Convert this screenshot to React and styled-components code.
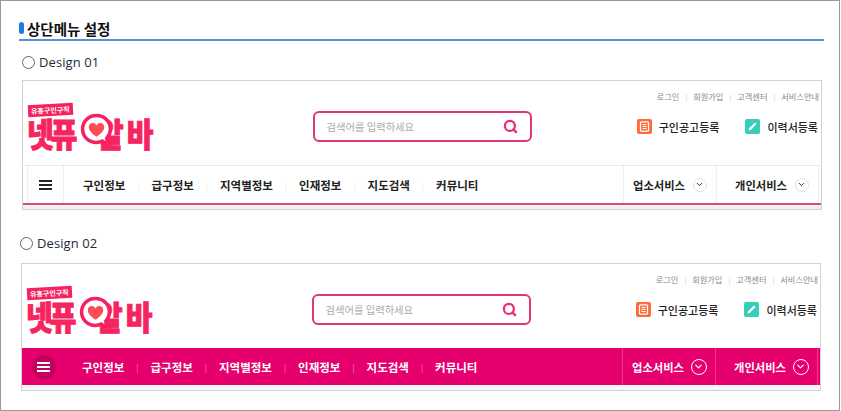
import styled, { createGlobalStyle } from 'styled-components';
import { ChevronDown, Search } from 'lucide-react';

const FONT = '"Noto Sans CJK KR", "Noto Sans", sans-serif';

const MENU = ['구인정보', '급구정보', '지역별정보', '인재정보', '지도검색', '커뮤니티'];
const LINKS = ['로그인', '회원가입', '고객센터', '서비스안내'];
const SERVICES = ['업소서비스', '개인서비스'];

const Logo = () => (
  <LogoWrap>
    <LogoTag>유흥구인구직</LogoTag>
    <LogoWord>넷퓨</LogoWord>
    <LogoWord $right>알바</LogoWord>
    <LogoBubble viewBox="0 0 32 32">
      <path
        d="M16 2.5C8.2 2.5 2.5 8.3 2.5 15.5S8.2 28.5 16 28.5c2.2 0 4-.4 5.6-1.2 1.8 1.6 4.2 2.6 7 2.7-1.5-1.6-2.5-3.6-2.8-5.4 2.2-2.4 3.7-5.4 3.7-8.6C29.5 8.3 23.8 2.5 16 2.5Z"
        fill="#fff"
        stroke="#f5225f"
        strokeWidth="3.4"
      />
      <path
        d="M16 23c-5-3.6-7.5-6.4-7.5-9.3 0-2.300 1.700-3.900 3.800-3.900 1.500 0 2.800.8 3.700 2.300.9-1.500 2.200-2.300 3.700-2.300 2.100 0 3.800 1.600 3.800 3.900 0 2.900-2.500 5.700-7.500 9.300Z"
        fill="#fb4d55"
      />
    </LogoBubble>
  </LogoWrap>
);

const DocIcon = () => (
  <svg width="15" height="15" viewBox="0 0 15 15">
    <rect width="15" height="15" rx="2" fill="#ff6b3d" />
    <rect x="3.5" y="2.8" width="8" height="9.4" rx="1" fill="none" stroke="#fff" strokeWidth="1.2" />
    <path d="M5.5 5.5h4M5.5 7.5h4M5.5 9.5h4" stroke="#fff" strokeWidth="1" />
  </svg>
);

const PenIcon = () => (
  <svg width="15" height="15" viewBox="0 0 15 15">
    <rect width="15" height="15" rx="2" fill="#38cdb9" />
    <path d="M3.5 11.5l.6-2.200 5.300-5.300a1 1 0 0 1 1.400 0l.2.200a1 1 0 0 1 0 1.400L5.700 10.900Z" fill="#fff" />
  </svg>
);

const Header = ({ filled }) => (
  <Box $filled={filled}>
    <TopLinks>
      {LINKS.map((link) => (
        <TopLink key={link}>{link}</TopLink>
      ))}
    </TopLinks>
    <MainRow>
      <Logo />
      <SearchBox>
        <Placeholder>검색어를 입력하세요</Placeholder>
        <Search size={15} strokeWidth={3.6} color="#ea2a78" />
      </SearchBox>
      <Actions>
        <Action>
          <DocIcon />
          <span>구인공고등록</span>
        </Action>
        <Action>
          <PenIcon />
          <span>이력서등록</span>
        </Action>
      </Actions>
    </MainRow>
    <Nav $filled={filled}>
      <BurgerCell $filled={filled}>
        <Burger $filled={filled}>
          <i />
          <i />
          <i />
        </Burger>
      </BurgerCell>
      <Menu>
        {MENU.map((item) => (
          <MenuItem key={item} $filled={filled}>{item}</MenuItem>
        ))}
      </Menu>
      {SERVICES.map((item) => (
        <Service key={item} $filled={filled}>
          {item}
          <Chevron $filled={filled}>
            <ChevronDown size={filled ? 11 : 9} strokeWidth={2.5} />
          </Chevron>
        </Service>
      ))}
    </Nav>
    <Tint $filled={filled} />
  </Box>
);

const App = () => (
  <>
    <GlobalStyle />
    <Frame>
      <Title>
        <TitleMark />
        상단메뉴 설정
      </Title>
      <Option>
        <Radio />
        Design 01
      </Option>
      <Header />
      <Option $second>
        <Radio />
        Design 02
      </Option>
      <Header filled />
    </Frame>
  </>
);

const GlobalStyle = createGlobalStyle`
  html, body {
    margin: 0;
    background: #fff;
  }
`;

const Frame = styled.div`
  width: 840px;
  height: 411px;
  box-sizing: border-box;
  border: 1px solid #999;
  padding: 16px 15px 0 18px;
  font-family: ${FONT};
  overflow: hidden;
`;

const Title = styled.div`
  display: flex;
  align-items: center;
  gap: 3px;
  height: 22px;
  border-bottom: 2px solid #5b8fd6;
  font-size: 14.5px;
  font-weight: 700;
  color: #111;
`;

const TitleMark = styled.span`
  width: 5px;
  height: 12px;
  border-radius: 3px;
  background: #1b7de0;
`;

const Option = styled.div`
  display: flex;
  align-items: center;
  gap: 4px;
  height: 20px;
  margin: ${({ $second }) => ($second ? '23px 0 10px 1px' : '11px 0 8px 3px')};
  font-family: "Open Sans", sans-serif;
  font-size: 13px;
  letter-spacing: 0.1px;
  color: #1f2a3c;
`;

const Radio = styled.span`
  width: 13px;
  height: 13px;
  box-sizing: border-box;
  border: 1px solid #666;
  border-radius: 50%;
`;

const Box = styled.div`
  width: 800px;
  height: ${({ $filled }) => ($filled ? '128px' : '130px')};
  box-sizing: border-box;
  margin-left: ${({ $filled }) => ($filled ? '2px' : '3px')};
  border: 1px solid #d2d2d2;
  background: #fff;
  display: flex;
  flex-direction: column;
`;

const TopLinks = styled.div`
  display: flex;
  flex-shrink: 0;
  justify-content: flex-end;
  align-items: center;
  height: 30px;
  padding-right: 2px;
`;

const TopLink = styled.span`
  font-size: 8.2px;
  color: #888;
  & + &::before {
    content: '|';
    margin: 0 6px;
    font-size: 7px;
    color: #ccc;
  }
`;

const MainRow = styled.div`
  display: grid;
  flex-shrink: 0;
  grid-template-columns: 1fr 219px 1fr;
  grid-template-rows: 31px;
  align-items: center;
  margin-bottom: 23px;
`;

const LogoWrap = styled.div`
  position: relative;
  width: 130px;
  height: 46px;
  margin-left: 4px;
`;

const LogoTag = styled.span`
  position: absolute;
  left: 1px;
  top: 0;
  padding: 1px 3px;
  background: #f5225f;
  color: #fff;
  font-size: 7px;
  font-weight: 700;
  line-height: 10px;
  white-space: nowrap;
  transform: rotate(-3deg);
`;

const LogoWord = styled.div`
  position: absolute;
  left: ${({ $right }) => ($right ? '70px' : '0')};
  top: 13px;
  font-size: 29px;
  font-weight: 900;
  line-height: 30px;
  letter-spacing: ${({ $right }) => ($right ? '3px' : '-3px')};
  white-space: nowrap;
  color: #f6245f;
  -webkit-text-stroke: 0.8px #f6245f;
  transform: scaleY(1.15);
`;

const LogoBubble = styled.svg`
  position: absolute;
  left: 53px;
  top: 9px;
  width: 33px;
  height: 33px;
`;

const SearchBox = styled.div`
  height: 31px;
  box-sizing: border-box;
  border: 2px solid #e0357a;
  border-radius: 6px;
  display: flex;
  align-items: center;
  justify-content: space-between;
  padding: 0 12px;
`;

const Placeholder = styled.span`
  font-size: 10.3px;
  color: #aaa;
`;

const Actions = styled.div`
  display: flex;
  justify-content: flex-end;
  gap: 26px;
  padding-right: 3px;
`;

const Action = styled.div`
  display: flex;
  align-items: center;
  gap: 7px;
  font-size: 11px;
  font-weight: 500;
  color: #222;
`;

const Nav = styled.div`
  display: flex;
  flex-shrink: 0;
  align-items: stretch;
  height: ${({ $filled }) => ($filled ? '37px' : '40px')};
  box-sizing: border-box;
  background: ${({ $filled }) => ($filled ? '#e6006e' : '#fff')};
  border-top: ${({ $filled }) => ($filled ? '0' : '1px solid #eaeaea')};
  border-bottom: ${({ $filled }) => ($filled ? '0' : '2px solid #d24f80')};
`;

const BurgerCell = styled.div`
  width: 37px;
  margin-left: 4px;
  box-sizing: border-box;
  display: flex;
  align-items: center;
  justify-content: center;
  border-left: ${({ $filled }) => ($filled ? '0' : '1px solid #eee')};
  border-right: ${({ $filled }) => ($filled ? '0' : '1px solid #eee')};
  padding-right: ${({ $filled }) => ($filled ? '2px' : '0')};
`;

const Burger = styled.span`
  width: 24px;
  height: 24px;
  flex-shrink: 0;
  border-radius: 50%;
  display: flex;
  flex-direction: column;
  align-items: center;
  justify-content: center;
  gap: 2px;
  background: ${({ $filled }) => ($filled ? '#c4005e' : 'transparent')};
  i {
    width: 13px;
    height: 2px;
    background: ${({ $filled }) => ($filled ? '#fff' : '#222')};
  }
`;

const Menu = styled.div`
  flex: 1;
  display: flex;
  align-items: center;
  padding-left: 19px;
`;

const MenuItem = styled.span`
  font-size: 11.5px;
  font-weight: 700;
  color: ${({ $filled }) => ($filled ? '#fff' : '#222')};
  & + &::before {
    content: '|';
    margin: 0 12px;
    font-size: 8px;
    font-weight: 400;
    vertical-align: 1px;
    color: ${({ $filled }) => ($filled ? '#f08ab8' : '#e8e8e8')};
  }
`;

const Service = styled.div`
  width: 93px;
  box-sizing: border-box;
  display: flex;
  align-items: center;
  gap: ${({ $filled }) => ($filled ? '7px' : '8px')};
  padding-left: 9px;
  font-size: 11.3px;
  font-weight: 700;
  color: ${({ $filled }) => ($filled ? '#fff' : '#222')};
  border-left: 1px solid ${({ $filled }) => ($filled ? '#f0338c' : '#eee')};
  &:last-child {
    width: 103px;
    padding-left: 18px;
    border-right: 1px solid ${({ $filled }) => ($filled ? '#f0338c' : '#eee')};
    margin-right: 2px;
  }
`;

const Chevron = styled.span`
  width: ${({ $filled }) => ($filled ? '16px' : '14px')};
  height: ${({ $filled }) => ($filled ? '16px' : '14px')};
  box-sizing: border-box;
  border-radius: 50%;
  display: flex;
  align-items: center;
  justify-content: center;
  border: 1px solid ${({ $filled }) => ($filled ? '#fff' : '#e2e2e2')};
`;

const Tint = styled.div`
  flex: 1;
  background: ${({ $filled }) => ($filled ? '#f6f6f6' : '#f8eef2')};
`;

export default App;
